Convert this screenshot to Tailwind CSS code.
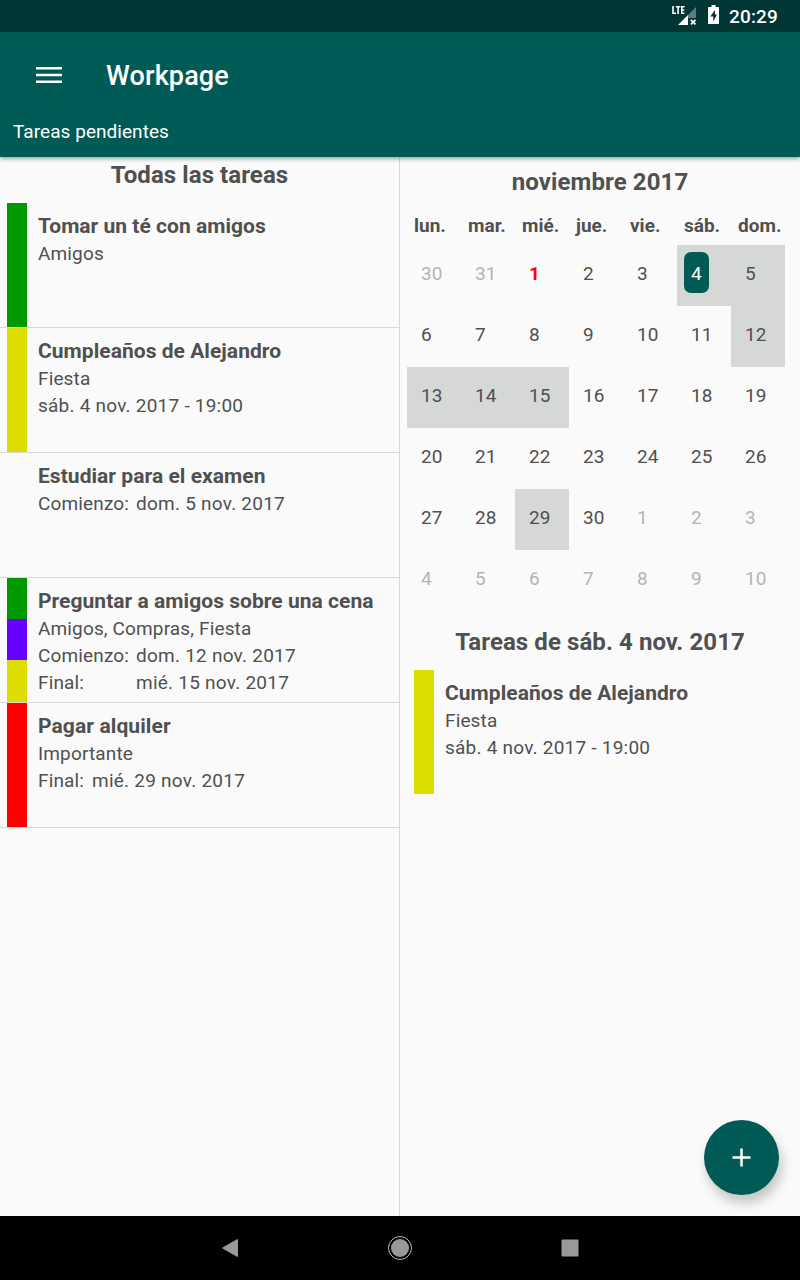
<!DOCTYPE html>
<html lang="es">
<head>
<meta charset="utf-8">
<title>Workpage</title>
<script src="https://cdn.jsdelivr.net/npm/@tailwindcss/browser@4"></script>
</head>
<body class="w-[800px] h-[1280px] overflow-hidden flex flex-col bg-[#fafafa] text-[#505050] text-[19px] leading-[27px] tracking-[0.14px] [font-family:Roboto,sans-serif] whitespace-nowrap">

<div class="h-8 shrink-0 bg-[#003735] flex items-start pl-[671px] text-white">
  <svg class="w-[26px] h-[26px] mt-[3px] shrink-0" viewBox="0 0 26 26">
    <path d="M2 3v7.300h3M4.800 3.700h4.600M7.100 3.700V11M13.500 3.700h-2.700v6.600h2.700M10.800 7h2.500" fill="none" stroke="#fff" stroke-width="1.6"/>
    <path d="M25 4v11h-8v-3z" fill="#5c7d7b"/>
    <path d="M17 12v10H7z" fill="#fff"/>
    <path d="M19.900 16.800l4.600 4.600M24.500 16.800l-4.600 4.600" stroke="#fff" stroke-width="1.8"/>
  </svg>
  <svg class="w-[12px] h-[20px] mt-[5px] ml-[11px] shrink-0" viewBox="0 0 12 20">
    <path d="M3.500 0h4v2H10.500q.5 0 .5.500V18.500q0 .5-.5.500H.5q-.5 0-.5-.5V2.500Q0 2 .5 2h3z" fill="#fff"/>
    <path d="M7 5L2.300 11.500h3v5L9 9.500H7z" fill="#003735"/>
  </svg>
  <span class="ml-[9px] mt-[3px] font-medium">20:29</span>
</div>

<header class="relative z-10 h-[125px] shrink-0 bg-[#005b56] text-white shadow-[0_2px_4px_rgba(0,0,0,0.35)]">
  <div class="h-[86px] flex items-center pl-9">
    <svg class="w-[26px] h-[18px]" viewBox="0 0 26 18"><path d="M0 2.300h26M0 9h26M0 15.700h26" stroke="#fff" stroke-width="2.500"/></svg>
    <h1 class="ml-11 pt-0.5 text-[27px] font-medium">Workpage</h1>
  </div>
  <p class="pl-[13px] tracking-[0.05px]">Tareas pendientes</p>
</header>

<main class="flex flex-1 min-h-0">
  <section class="w-[400px] border-r border-[#d6d7d7]">
    <h2 class="h-[46px] pt-[5px] text-center text-[24px] tracking-[0.08px] font-bold">Todas las tareas</h2>
    <article class="h-[125px] border-b border-[#d8d9d9] pl-[7px] flex gap-[11px]">
      <div class="w-5 bg-[#009900]"></div>
      <div class="pt-[10px]"><h3 class="text-[21px] tracking-[0.02px] font-bold">Tomar un té con amigos</h3><p>Amigos</p></div>
    </article>
    <article class="h-[125px] border-b border-[#d8d9d9] pl-[7px] flex gap-[11px]">
      <div class="w-5 bg-[#dddd00]"></div>
      <div class="pt-[10px]"><h3 class="text-[21px] tracking-[0.04px] font-bold">Cumpleaños de Alejandro</h3><p>Fiesta</p><p class="tracking-[0.23px]">sáb. 4 nov. 2017 - 19:00</p></div>
    </article>
    <article class="h-[125px] border-b border-[#d8d9d9] pl-[7px] flex gap-[11px]">
      <div class="w-5"></div>
      <div class="pt-[10px]"><h3 class="text-[21px] tracking-[0.04px] font-bold">Estudiar para el examen</h3><p class="grid grid-cols-[91px_auto] gap-x-[7px]"><span>Comienzo:</span><span class="tracking-[0.24px]">dom. 5 nov. 2017</span></p></div>
    </article>
    <article class="h-[125px] border-b border-[#d8d9d9] pl-[7px] flex gap-[11px]">
      <div class="w-5 bg-[#dddd00]"><div class="h-[41px] bg-[#009900]"></div><div class="h-[41px] bg-[#6600ff]"></div></div>
      <div class="pt-[10px]"><h3 class="text-[21px] tracking-[0.04px] font-bold">Preguntar a amigos sobre una cena</h3><p>Amigos, Compras, Fiesta</p>
        <div class="grid grid-cols-[91px_auto] gap-x-[7px]"><span>Comienzo:</span><span class="tracking-[0.24px]">dom. 12 nov. 2017</span><span>Final:</span><span class="tracking-[0.24px]">mié. 15 nov. 2017</span></div></div>
    </article>
    <article class="h-[125px] border-b border-[#d8d9d9] pl-[7px] flex gap-[11px]">
      <div class="w-5 bg-[#ff0000]"></div>
      <div class="pt-[10px]"><h3 class="text-[21px] tracking-[0.1px] font-bold">Pagar alquiler</h3><p>Importante</p><p class="grid grid-cols-[47px_auto] gap-x-[7px]"><span>Final:</span><span class="tracking-[0.24px]">mié. 29 nov. 2017</span></p></div>
    </article>
  </section>

  <section class="flex-1">
    <h2 class="h-[55px] pt-[12px] text-center text-[24px] tracking-[0.1px] font-bold">noviembre 2017</h2>
    <div class="ml-[7px] h-[33px] grid grid-cols-[repeat(7,54px)] font-bold pl-[7px] tracking-normal">
      <span>lun.</span><span>mar.</span><span>mié.</span><span>jue.</span><span>vie.</span><span>sáb.</span><span>dom.</span>
    </div>
    <div class="ml-[7px] grid grid-cols-[repeat(7,54px)] auto-rows-[61px] *:pl-[14px] *:pt-[15px]">
      <div class="text-[#b4b4b4]">30</div><div class="text-[#b4b4b4]">31</div><div class="text-[#ff0000] font-bold">1</div><div>2</div><div>3</div>
      <div class="bg-[#d6d7d7] !pl-[7px] !pt-[7px]"><div class="w-[25px] h-[41px] rounded-[7px] bg-[#005b56] text-white pt-2 pl-[7px]">4</div></div><div class="bg-[#d6d7d7]">5</div>
      <div>6</div><div>7</div><div>8</div><div>9</div><div>10</div><div>11</div><div class="bg-[#d6d7d7]">12</div>
      <div class="bg-[#d6d7d7]">13</div><div class="bg-[#d6d7d7]">14</div><div class="bg-[#d6d7d7]">15</div><div>16</div><div>17</div><div>18</div><div>19</div>
      <div>20</div><div>21</div><div>22</div><div>23</div><div>24</div><div>25</div><div>26</div>
      <div>27</div><div>28</div><div class="bg-[#d6d7d7]">29</div><div>30</div><div class="text-[#b4b4b4]">1</div><div class="text-[#b4b4b4]">2</div><div class="text-[#b4b4b4]">3</div>
      <div class="text-[#b4b4b4]">4</div><div class="text-[#b4b4b4]">5</div><div class="text-[#b4b4b4]">6</div><div class="text-[#b4b4b4]">7</div><div class="text-[#b4b4b4]">8</div><div class="text-[#b4b4b4]">9</div><div class="text-[#b4b4b4]">10</div>
    </div>
    <h2 class="h-[59px] pt-[18px] text-center text-[24px] tracking-[0.08px] font-bold">Tareas de sáb. 4 nov. 2017</h2>
    <article class="h-[124px] pl-[14px] flex gap-[11px]">
      <div class="w-5 bg-[#dddd00]"></div>
      <div class="pt-[10px]"><h3 class="text-[21px] tracking-[0.04px] font-bold">Cumpleaños de Alejandro</h3><p>Fiesta</p><p class="tracking-[0.23px]">sáb. 4 nov. 2017 - 19:00</p></div>
    </article>
  </section>
</main>

<button aria-label="Añadir" class="absolute left-[704px] top-[1120px] size-[75px] rounded-full bg-[#005b56] flex items-center justify-center shadow-[3px_8px_12px_rgba(0,0,0,0.22)]">
  <svg class="size-[19px]" viewBox="0 0 19 19"><path d="M0.500 9.500h18M9.500 0.500v18" stroke="#fff" stroke-width="2.500"/></svg>
</button>

<nav class="h-16 shrink-0 bg-black flex items-center">
  <svg class="w-[800px] h-16" viewBox="0 0 800 64">
    <path d="M237.500 23.500v17L222.500 32z" fill="#999" stroke="#999" stroke-linejoin="round" stroke-width="1"/>
    <circle cx="400" cy="32" r="11.500" fill="none" stroke="#bbb"/>
    <circle cx="400" cy="32" r="9" fill="#999"/>
    <rect x="561.500" y="23.500" width="17" height="17" rx="1" fill="#999"/>
  </svg>
</nav>
</body>
</html>
